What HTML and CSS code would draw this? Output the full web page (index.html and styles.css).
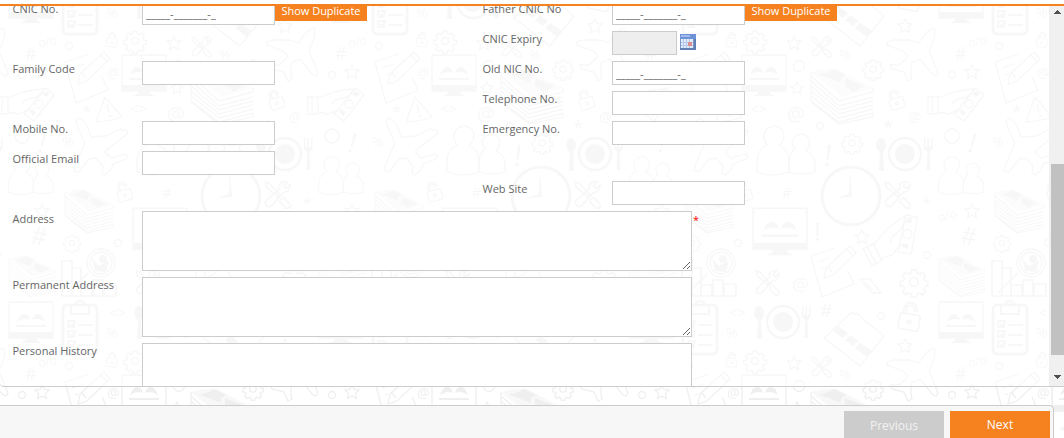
FILE: index.html
```html
<!DOCTYPE html>
<html lang="en">
<head>
<meta charset="utf-8">
<title>Contact Information</title>
<link rel="stylesheet" href="styles.css">
</head>
<body>
<svg class="wallpaper" width="1064" height="438" aria-hidden="true">
  <defs>
    <g id="gear"><circle r="3.2"/><path d="M-1.7-8h3.4l.5 2.2 2 .9 2-1.3 2.3 2.3-1.3 2 .8 2 2.3.5v3.2l-2.3.5-.8 2 1.3 2-2.3 2.3-2-1.3-2 .8-.5 2.3h-3.2l-.5-2.3-2-.8-2 1.3-2.3-2.3 1.3-2-.8-2-2.3-.5v-3.2l2.3-.5.8-2-1.3-2 2.3-2.3 2 1.3 2-.9z" transform="translate(0 -1)"/></g>
    <path id="star" d="M0-7l2.1 4.5 4.9.6-3.6 3.4.9 4.9L0 4l-4.3 2.4.9-4.9L-7-1.9l4.900-.6z"/>
    <g id="lock"><rect x="-7" y="-2" width="14" height="11" rx="2"/><path d="M-5-2v-3a4.500 4.500 0 0 1 9-1v1h-2v-1a2.500 2.500 0 0 0-5 1v3"/><circle cy="3.500" r="1.300"/></g>
    <g id="tools"><path d="M-9-10l3 1 8 9-1.500 1.500-9-8zM3 3l2-1 5 5q1 2-1 3t-3-1L2 5zM10-8l-3 3-2-2 3-3q-4-1-6 2v3l-10 9q-2 2 0 4t4 0l9-10q5 0 5-6z"/></g>
    <g id="monitor"><path d="M-22-19h44v36h-44z"/><path class="solid" d="M-22 11h44v6h-44zM-5 17H5l2 3 4 2h-22l4-2z"/><path class="solid" d="M-14 1q3-9 8-8 4 1 5 6-6-3-13 2zM14 1q-3-9-8-8-4 1-5 6 6-3 13 2zM-15 4h30v2h-30z"/></g>
    <g id="clipboard"><rect x="-17" y="-23" width="34" height="49" rx="4" stroke-width="2.500"/><path d="M-9-23v9H9v-9H5q-1-4-5-4t-5 4z" stroke-width="2"/><path d="M-12-7h6v6h-6zM-12 3h6v6h-6zM-12 13h6v6h-6zM-10-4l2 2 4-5M-10 6l2 2 4-5M-10 16l2 2 4-5M-2-3h15M-2 7h15M-2 17h15"/></g>
    <g id="stack"><path class="solid" d="M-31-24q13-4 26-3L31-8 0 1z" opacity=".45"/><path class="solid" d="M-24-22q9 0 16-5l12 6q-7 3-5 8zM3-18l20 8-12 6q-4-5-8-5z"/><path d="M-31-24v4L-3 5 31-4v-4M-31-19v4L-3 10 31 1M-31-14v4L-3 14 31 5M-31-9v4L-3 18 31 9M-31-4v4L-3 22 31 13M-31 1v4L-3 26 31 17v4L-3 28-31 6"/></g>
    <g id="note"><path d="M-22-15L2-23M15 0l6 13L-11 26-22-15"/><path d="M-7-3L17-25l6 7L0 4l-9 3zM-5-4l4 5M14-22l6 7M-15-9l12-4M-12-2l3-1"/></g>
    <path id="plane" d="M23-27l1 8-6 15 9 22-2 3-3-1L9 4 0 8v11l1 5-4 2-4-9-12-3-2-4h9l6-5 3-4-5-5-16-6v-3l7-2h15l10 3Q14-24 23-27z"/>
    <path id="plane-tilted" d="M-22-28q8 3 12 19l15-1 14-7 8 2-1 3L8 2 4 6l6 6 14-4 3 2-2 3-13 5-2 6-6 5-3-2 1-7-7-8-7 1-10 13-5-1 1-5 10-23-8-17-1-5z"/>
    <g id="people"><path d="M-19-6q-7-10 1-17 9-5 15 3 3 8-4 15 10 3 10 15v11q-16 6-32 0V12q0-14 10-18z"/><path d="M9-2q-6-8 1-13 8-5 13 3 2 7-3 12 9 4 9 13v8q-12 4-26 0v-8Q3 3 9-2z"/></g>
    <g id="plate"><circle r="16" stroke-width="2.500"/><circle class="solid" r="10"/><ellipse class="solid" cx="-24" cy="-9" rx="5" ry="7"/><path class="solid" d="M-25-4h3l1 21h-5zM19-16h1.500v9h2v-9H24v9h2v-9h1.500v11l-3 3 1 18h-4l1-18-3.500-3z"/></g>
    <g id="hand"><path d="M-28-8h10v17h-10zM-24-8v17M-18-7l16-6q13-3 21-3l-8 8-12 3-3 4M-18 7l10 2 12-5"/><path d="M1 6L20-17l8 7L8 16-2 9z"/><circle cx="13" cy="-1" r="4"/><path class="solid" d="M16-11l5-3 3 3-4 3zM3 6l3-2 4 4-3 3z"/></g>
    <g id="card"><path d="M-30-1L-3-26l8 1 4 5 21 17L6 27z"/><path class="solid" d="M-21-8l5-5 10 7-5 5zM-9 1l5-5 8 6-5 5zM1 9l5-5 12 8-5 6z"/></g>
    <g id="tile">
      <use href="#clipboard" x="80" y="8"/><use href="#clipboard" x="80" y="328"/>
      <use href="#gear" transform="translate(135 41) scale(1.100)"/>
      <use href="#star" x="174" y="43"/><use href="#tools" transform="translate(201 47)"/>
      <use href="#lock" transform="translate(112 40) scale(.75) rotate(8)"/>
      <circle cx="69" cy="46" r="3.500"/><use href="#star" x="42" y="72"/><circle cx="22" cy="75" r="3.500"/>
      <use href="#plane" x="291" y="55"/><use href="#card" x="234" y="19"/><use href="#star" x="285" y="26"/>
      <use href="#monitor" x="144" y="74"/><circle cx="179" cy="66" r="5.500"/>
      <use href="#star" transform="translate(177 88) scale(.85)"/>
      <circle cx="200" cy="126" r="3.500"/><use href="#stack" x="222" y="96"/>
      <use href="#gear" x="253" y="69"/><use href="#lock" transform="translate(276 100) rotate(-18)"/>
      <use href="#hand" x="26" y="105"/><use href="#note" x="87" y="77"/>
      <path d="M105 97l17 20q-10 4-26 5zM107 104l2 9" stroke-linejoin="round"/><circle cx="110" cy="116" r=".7"/>
      <use href="#people" x="166" y="151"/><use href="#gear" x="232" y="143"/>
      <use href="#plate" x="285" y="154"/><circle cx="22" cy="136" r="7"/>
      <use href="#people" transform="translate(31 176) scale(.77)"/>
      <use href="#plane-tilted" x="101" y="146"/>
      <circle cx="231" cy="196" r="29" stroke-width="3"/><path class="solid" d="M230 171l2 26-16 1 13-4z"/>
      <use href="#tools" transform="translate(277 195) scale(1.300)"/>
      <use href="#lock" transform="translate(124 192) rotate(-15)"/><use href="#star" x="42" y="211"/>
      <use href="#stack" transform="translate(89 211) scale(.78)"/>
      <use href="#hand" transform="translate(275 242) rotate(-28) scale(1.120)"/>
      <use href="#monitor" transform="translate(160 230) scale(1.220 1.150)"/>
      <use href="#star" x="242" y="237"/><circle cx="307" cy="255" r="3.500"/><use href="#gear" transform="translate(72 243) scale(.85)"/>
      <circle cx="118" cy="243" r="3.500"/><use href="#note" x="213" y="271"/>
      <use href="#stack" transform="translate(32 276) scale(.74)"/>
      <path d="M62 261h10v35H62zM72 268h9v28h-9zM81 285h11v11H81zM93 280h10v16H93zM104 284h12v12h-12zM68 293l20-20" stroke-width="1.700"/>
      <circle cx="101" cy="263" r="14"/><circle cx="101" cy="263" r="11"/><circle class="solid" cx="103" cy="259" r="4"/><path class="solid" d="M92 258l7 8 10-6-3 12-11-1z"/>
      <use href="#tools" transform="translate(147 283) scale(1.200)"/><path d="M240 279h10l11 14h-9zM244 282l9 8"/>
      <use href="#gear" transform="translate(294 282) scale(1.350)"/>
      <use href="#monitor" transform="translate(31 321)"/><use href="#plate" x="163" y="322"/><circle cx="261" cy="316" r="3.500"/>
      <use href="#lock" transform="translate(290 317) rotate(10) scale(1.450)"/>
      <g class="signs">
        <text x="106" y="18">%</text><text x="219" y="60">%</text><text x="62" y="147">%</text>
        <text x="25" y="60" font-size="18">#</text><text x="162" y="198" font-size="15">#</text><text x="31" y="245" font-size="25" transform="rotate(10 39 236)">#</text><text x="200" y="317" font-size="19">#</text>
        <text x="38" y="46" transform="rotate(-12 46 41)" font-size="12">o/o</text><text x="8" y="220" transform="rotate(-12 17 216)" font-size="12">o/o</text>
        <text x="167" y="121" font-size="20">@</text><text x="289" y="122">@</text><text x="107" y="78">@</text><text x="172" y="291" font-size="19">@</text>
        <text x="263" y="134" font-size="19">*</text><text x="82" y="117" font-size="17">*</text><text x="302" y="209" font-size="17">*</text>
        <text x="130" y="114" font-size="15">&lt;&gt;</text><text x="109" y="318" font-size="15">&lt;&gt;</text>
        <text x="204" y="166" font-size="30" transform="rotate(6 207 156)">!</text><text x="39" y="153" font-size="27" transform="rotate(18 44 143)">!</text><text x="194" y="241" font-size="26">!</text>
      </g>
    </g>
    <pattern id="doodles" width="310" height="320" patternUnits="userSpaceOnUse">
      <use href="#tile"/><use href="#tile" x="-310"/><use href="#tile" x="310"/><use href="#tile" y="-320"/><use href="#tile" y="320"/>
    </pattern>
  </defs>
  <rect width="1064" height="438" fill="url(#doodles)" stroke="none"/>
</svg>

<main class="page">
  <section class="panel">
    <div class="viewport">
      <form class="form">
        <label>CNIC No.</label>
        <div class="field"><input type="text" value="_____-_______-_"><button type="button" class="duplicate">Show Duplicate</button></div>
        <label>Father CNIC No</label>
        <div class="field"><input type="text" value="_____-_______-_"><button type="button" class="duplicate">Show Duplicate</button></div>

        <label class="right">CNIC Expiry</label>
        <div class="field"><input type="text" class="date" disabled>
          <svg class="calendar" width="16" height="16" viewBox="0 0 16 16">
            <path fill="#7d97c6" d="M0 0h16v16H0z"/><path fill="#6f92d6" d="M0 0h16v5H0z"/><path fill="#9db9ee" d="M1 1h9v2H1z"/>
            <path fill="#dfeafb" d="M1 5h12v9H1z"/><path stroke="#b4c8e8" d="M1 8.500h12M1 11.500h12M3.500 5v9M6.500 5v9M9.500 5v9"/>
            <path fill="#d98f92" d="M8 8h4v4H8z"/><path fill="#5f7fb5" d="M0 14h16v2H0zM14 5h2v11h-2z"/>
          </svg>
        </div>

        <label>Family Code</label>
        <div class="field"><input type="text"></div>
        <label>Old NIC No.</label>
        <div class="field"><input type="text" value="_____-_______-_"></div>

        <label class="right">Telephone No.</label>
        <div class="field"><input type="text"></div>

        <label>Mobile No.</label>
        <div class="field"><input type="text"></div>
        <label>Emergency No.</label>
        <div class="field"><input type="text"></div>

        <label class="left">Official Email</label>
        <div class="field last"><input type="text"></div>

        <label class="right">Web Site</label>
        <div class="field"><input type="text"></div>

        <label class="left">Address</label>
        <div class="field wide"><textarea></textarea><span class="required">*</span></div>
        <label class="left">Permanent Address</label>
        <div class="field wide"><textarea></textarea></div>
        <label class="left">Personal History</label>
        <div class="field wide"><textarea></textarea></div>
      </form>
    </div>
    <div class="scrollbar">
      <svg class="arrow" width="7" height="4" viewBox="0 0 7 4"><path d="M3 0h1v1h1v1h1v1h1v1H0V3h1V2h1V1h1z"/></svg>
      <div class="thumb"></div>
      <svg class="arrow" width="7" height="4" viewBox="0 0 7 4"><path d="M0 0h7v1H6v1H5v1H4v1H3V3H2V2H1V1H0z"/></svg>
    </div>
  </section>
  <div class="gap"><div class="edge"></div></div>
  <footer class="actions">
    <button type="button" class="previous">Previous</button>
    <button type="button" class="next">Next</button>
  </footer>
</main>
</body>
</html>
```
FILE: styles.css
```css
* {
  box-sizing: border-box;
}

body {
  margin: 0;
  height: 438px;
  overflow: hidden;
  background: #fff;
  color: #666;
  font-family: "Open Sans", sans-serif;
  font-size: 11px;
}

.wallpaper {
  position: absolute;
  inset: 0;
  z-index: -1;
  fill: none;
  stroke: #efefef;
  stroke-width: 1.3;
}

.wallpaper .solid {
  fill: #efefef;
  stroke: none;
}

.signs {
  fill: #efefef;
  stroke: none;
  font-size: 14px;
}

.page {
  display: flex;
  flex-direction: column;
  height: 438px;
}

.page::before {
  content: "";
  flex: 0 0 4px;
  background: #fff;
}

.panel {
  display: flex;
  flex: 0 0 383px;
  border-top: 2px solid #f6821f;
  border-bottom: 1px solid #ccc;
  border-bottom-left-radius: 4px;
  background: rgba(255, 255, 255, 0.5);
}

.viewport {
  flex: 1;
  height: 380px;
  overflow: hidden;
}

.form {
  display: grid;
  grid-template-columns: 130px 340px 130px 1fr;
  grid-auto-rows: minmax(30px, auto);
  margin-top: -5px;
  padding-left: 12px;
}

label {
  padding-left: 0.5px;
  line-height: 16px;
}

.left {
  grid-column: 1;
}

.right {
  grid-column: 3;
}

.field {
  display: flex;
  align-items: flex-start;
}

.last {
  grid-column: 2 / -1;
}

.wide {
  grid-column: 2 / -1;
  height: 66px;
}

input,
textarea {
  margin: 0;
  border: 1px solid #ccc;
  border-radius: 0;
  background: #fff;
  color: #666;
  font: inherit;
}

input {
  width: 133px;
  height: 24px;
  padding: 1px 3px 0;
}

.date {
  width: 65px;
  background: #eee;
}

.calendar {
  margin: 3px 0 0 3px;
}

textarea {
  width: 550px;
  height: 60px;
}

.required {
  margin: 0;
  padding-left: 1px;
  color: #f00;
  line-height: 18px;
}

button {
  margin: 0;
  padding: 0;
  border: 0;
  background: #f6821f;
  color: #fff;
  font: 11px "Open Sans", sans-serif;
}

.duplicate {
  width: 92px;
  height: 20px;
  padding-bottom: 1px;
  letter-spacing: -0.02px;
}

.scrollbar {
  display: flex;
  flex: 0 0 15px;
  flex-direction: column;
  align-items: center;
  padding: 4px 0 7px;
  background: #f0f0f0;
}

.arrow {
  flex: none;
  margin-left: 1px;
  fill: #505050;
}

.thumb {
  align-self: flex-end;
  width: 13px;
  height: 191px;
  margin: 150px 0 auto;
  background: #c1c1c1;
}

.gap {
  display: flex;
  flex: 0 0 18px;
}

.edge {
  width: 1053px;
  border-right: 1px solid #eee;
}

.actions {
  display: flex;
  flex: 1;
  justify-content: flex-end;
  gap: 6px;
  width: 1054px;
  padding: 5px 3px 0 0;
  border: solid #ccc;
  border-width: 1px 1px 0 0;
  border-top-right-radius: 5px;
  background: #f7f7f7;
}

.actions button {
  width: 100px;
  height: 27px;
  font-size: 12px;
}

.actions .previous {
  padding-top: 2px;
  background: #ccc;
  color: #f2f2f2;
}
```
